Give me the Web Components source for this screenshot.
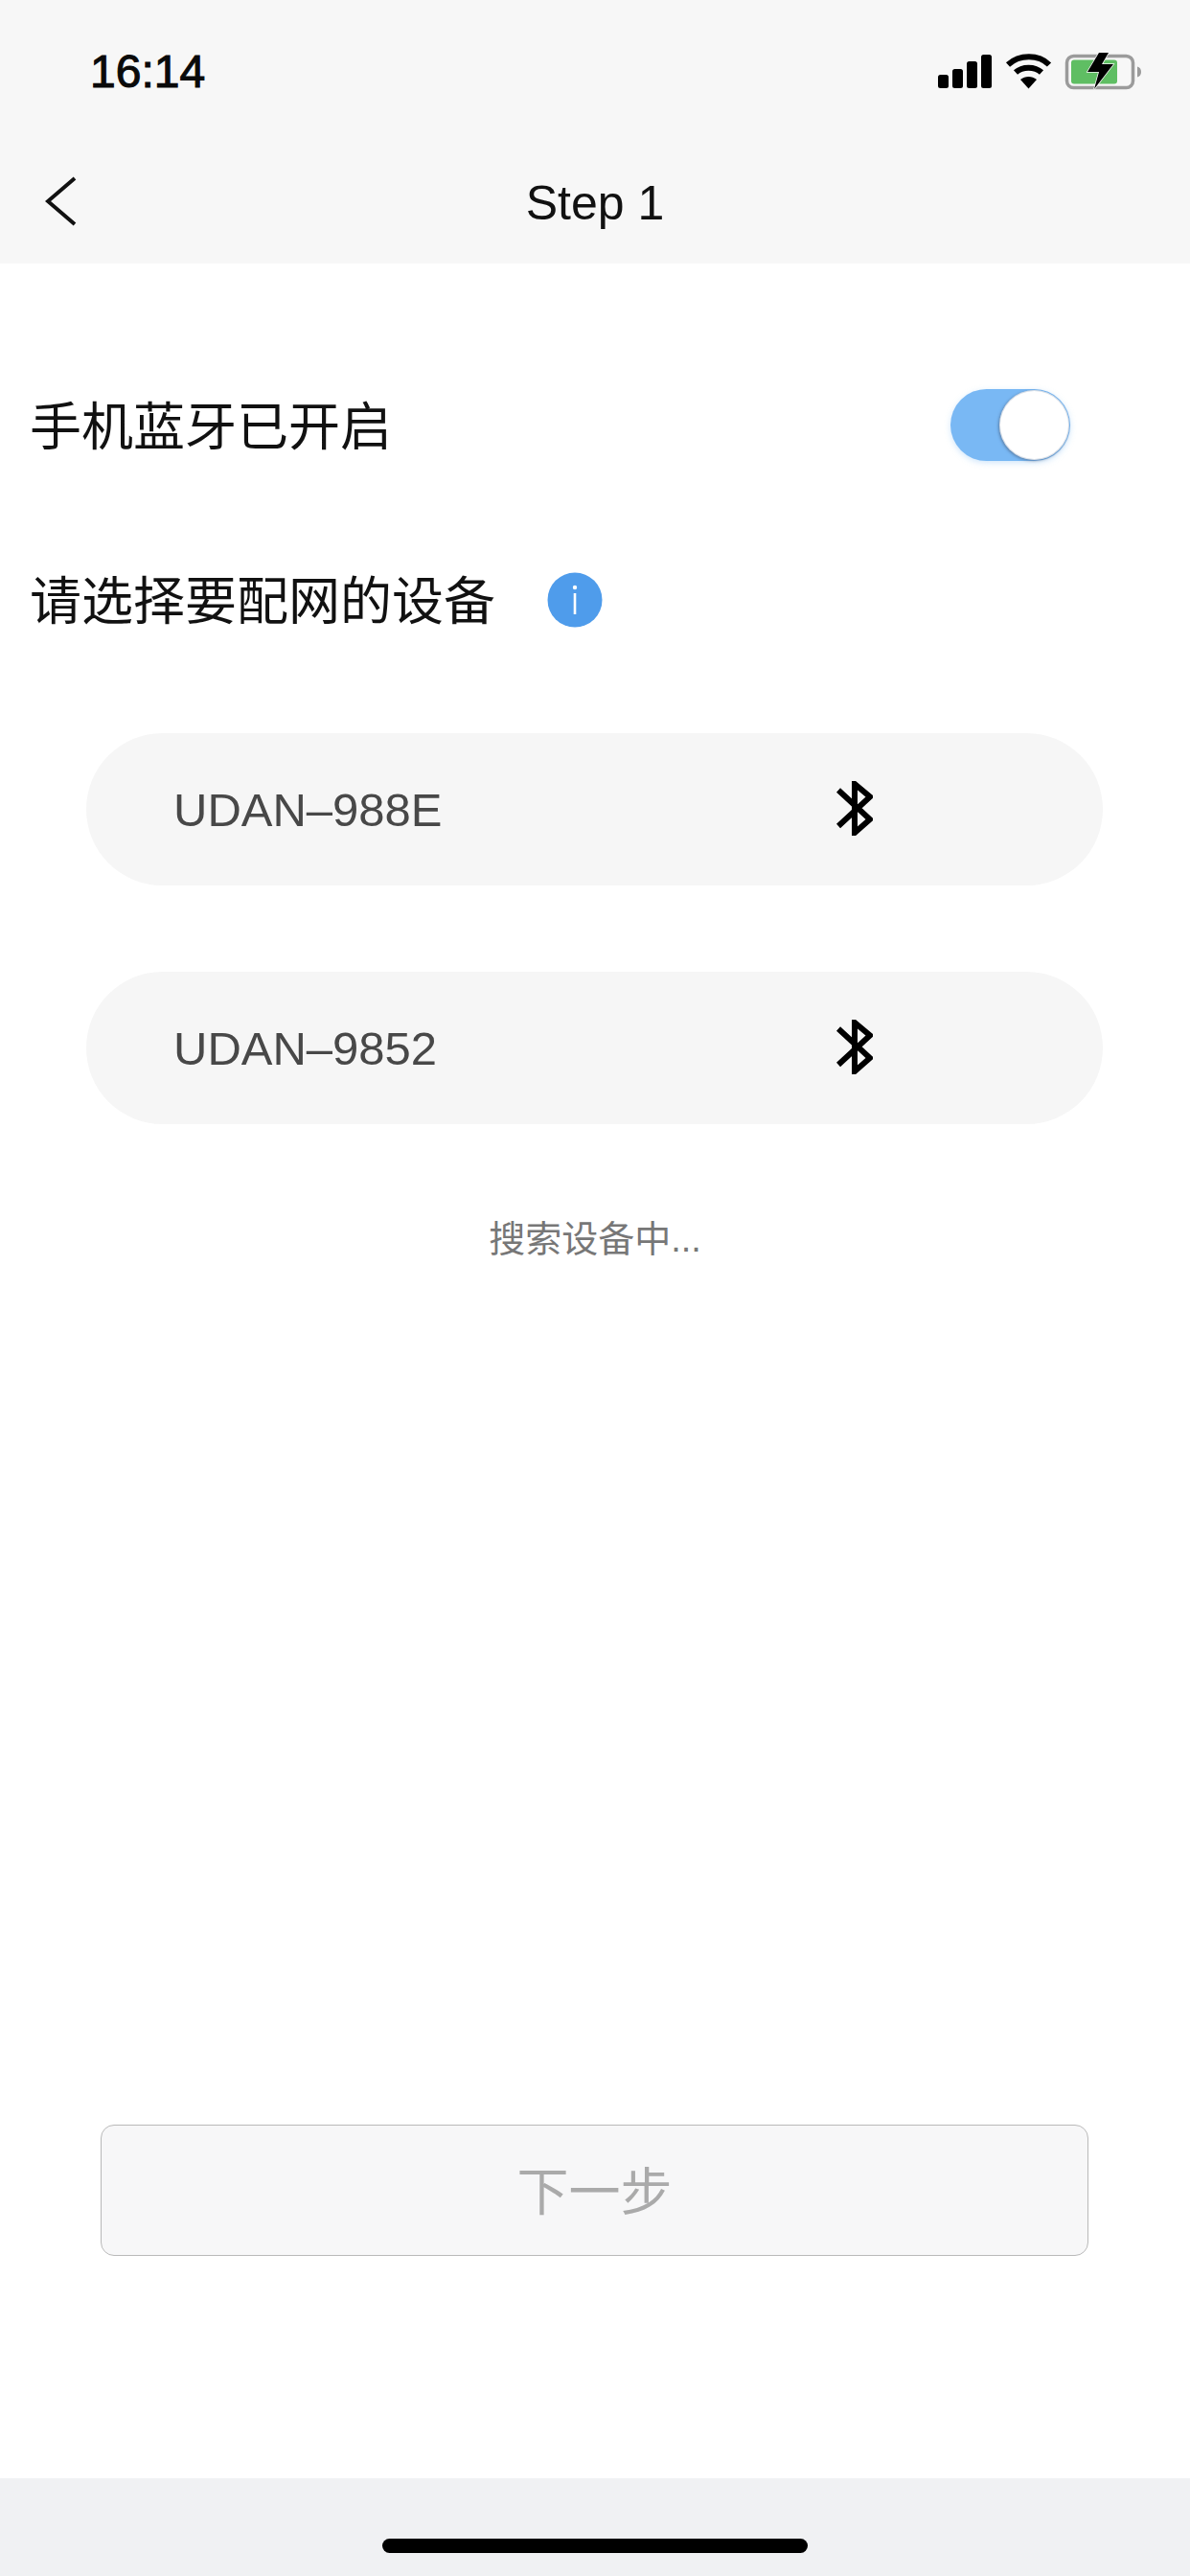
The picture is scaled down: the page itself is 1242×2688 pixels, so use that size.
<!DOCTYPE html>
<html lang="zh">
<head>
<meta charset="utf-8">
<title>Step 1</title>
<style>
  html, body { margin: 0; padding: 0; background: #fff; }
  body { font-family: "Liberation Sans", "Noto Sans CJK SC", sans-serif; }
</style>
</head>
<body>
<app-screen>
  <status-bar slot="top" time="16:14"></status-bar>
  <nav-bar slot="top">Step 1</nav-bar>

  <setting-row class="first">手机蓝牙已开启<toggle-switch slot="control"></toggle-switch></setting-row>
  <setting-row gap="54">请选择要配网的设备<info-badge slot="control"></info-badge></setting-row>

  <device-list>
    <device-row>UDAN–988E</device-row>
    <device-row>UDAN–9852</device-row>
  </device-list>
  <search-hint>搜索设备中...</search-hint>

  <next-button slot="footer">下一步</next-button>
  <home-bar slot="bottom"></home-bar>
</app-screen>

<script>
  const CJK = '"Liberation Sans", "Noto Sans CJK SC", sans-serif';

  class AppScreen extends HTMLElement {
    constructor() {
      super();
      this.attachShadow({ mode: 'open' });
      this.shadowRoot.innerHTML = `
        <style>
          :host { display: flex; flex-direction: column; width: 1242px; height: 2688px; overflow: hidden; background: #fff; font-family: ${CJK}; }
          .top { background: #f7f7f7; height: 275px; display: flex; flex-direction: column; }
          main { flex: 1; display: flex; flex-direction: column; padding: 123px 0 232px; min-height: 0; }
          .footer { margin-top: auto; }
        </style>
        <div class="top"><slot name="top"></slot></div>
        <main>
          <slot></slot>
          <div class="footer"><slot name="footer"></slot></div>
        </main>
        <slot name="bottom"></slot>
      `;
    }
  }

  class StatusBar extends HTMLElement {
    constructor() {
      super();
      this.attachShadow({ mode: 'open' });
      this.shadowRoot.innerHTML = `
        <style>
          :host { display: flex; align-items: center; justify-content: space-between; height: 150px; padding: 0 50px 0 94px; box-sizing: border-box; }
          .time { font-size: 48px; font-weight: 400; -webkit-text-stroke: 1.1px #0a0a0a; color: #0a0a0a; line-height: 1; }
          svg { display: block; }
        </style>
        <span class="time">${this.getAttribute('time')}</span>
        <svg width="213" height="40" viewBox="0 0 213 40">
          <g fill="#000">
            <rect x="0" y="23" width="11" height="14" rx="2.5"/>
            <rect x="15" y="17" width="11" height="20" rx="2.5"/>
            <rect x="30" y="9" width="11" height="28" rx="2.5"/>
            <rect x="45" y="2" width="11" height="35" rx="2.5"/>
          </g>
          <g fill="none" stroke="#000" stroke-width="6">
            <path d="M73 12.5C85 1.5 105 1.5 116 12.5"/>
            <path d="M81 20.5C88 14 101 14 108 20.5"/>
          </g>
          <path d="M86 28C91 24 98 24 103 28L94.5 37.5Z" fill="#000"/>
          <rect x="134.5" y="3.5" width="69" height="33" rx="7" fill="none" stroke="#9b9b9b" stroke-width="3.500"/>
          <rect x="139" y="7.500" width="48" height="25" rx="3" fill="#5fbe63"/>
          <path d="M208 14.500c2.500.5 4 2.500 4 5.500s-1.500 5-4 5.500z" fill="#9b9b9b"/>
          <path d="M168 0H178L171 12H183L163 38L168 20H156Z" fill="#000" stroke="#f7f7f7" stroke-width="1.500" paint-order="stroke"/>
        </svg>
      `;
    }
  }

  class NavBar extends HTMLElement {
    constructor() {
      super();
      this.attachShadow({ mode: 'open' });
      this.shadowRoot.innerHTML = `
        <style>
          :host { display: grid; grid-template-columns: 1fr auto 1fr; align-items: center; height: 120px; padding: 0 47px; box-sizing: border-box; margin-bottom: 5px; }
          .title { font-size: 50px; color: #111; line-height: 1; padding-top: 3px; }
          svg { display: block; }
        </style>
        <svg width="34" height="54" viewBox="0 0 34 54">
          <path d="M31 3L3 27L31 51" fill="none" stroke="#111" stroke-width="4"/>
        </svg>
        <span class="title"><slot></slot></span>
        <span></span>
      `;
    }
  }

  class SettingRow extends HTMLElement {
    constructor() {
      super();
      this.attachShadow({ mode: 'open' });
      this.shadowRoot.innerHTML = `
        <style>
          :host { display: flex; align-items: center; height: 90px; padding: 0 0 0 31px; font-size: 54px; color: #111; }
          :host(.first) { margin-bottom: 92px; justify-content: space-between; padding-right: 125px; }
          .label { line-height: 1; padding-top: 5px; }
          .ctl { display: flex; }
        </style>
        <span class="label"><slot></slot></span>
        <span class="ctl"><slot name="control"></slot></span>
      `;
      const gap = this.getAttribute('gap');
      if (gap) this.shadowRoot.querySelector('.ctl').style.marginLeft = gap + 'px';
    }
  }

  class ToggleSwitch extends HTMLElement {
    constructor() {
      super();
      this.attachShadow({ mode: 'open' });
      this.shadowRoot.innerHTML = `
        <style>
          :host { display: flex; justify-content: flex-end; align-items: center; width: 125px; height: 75px; padding: 1px; box-sizing: border-box; border-radius: 38px; background: #79b8f4; box-shadow: 0 2px 6px rgba(121, 184, 244, .35); }
          .knob { width: 73px; height: 73px; border-radius: 50%; background: #fff; box-shadow: -1px 1px 3px rgba(60, 80, 110, .55), inset 0 0 0 1px rgba(140, 160, 185, .35); }
        </style>
        <div class="knob"></div>
      `;
    }
  }

  class InfoBadge extends HTMLElement {
    constructor() {
      super();
      this.attachShadow({ mode: 'open' });
      this.shadowRoot.innerHTML = `
        <style>
          :host { display: block; width: 58px; height: 58px; margin-top: 2px; }
          svg { display: block; }
        </style>
        <svg width="58" height="58" viewBox="0 0 58 58">
          <circle cx="29" cy="29" r="28.500" fill="#4f9ceb"/>
          <circle cx="29" cy="16" r="2.200" fill="#fff"/>
          <rect x="27.700" y="22" width="2.600" height="22" fill="#fff"/>
        </svg>
      `;
    }
  }

  class DeviceList extends HTMLElement {
    constructor() {
      super();
      this.attachShadow({ mode: 'open' });
      this.shadowRoot.innerHTML = `
        <style>
          :host { display: flex; flex-direction: column; gap: 90px; margin: 95px 91px 0 90px; }
        </style>
        <slot></slot>
      `;
    }
  }

  class DeviceRow extends HTMLElement {
    constructor() {
      super();
      this.attachShadow({ mode: 'open' });
      this.shadowRoot.innerHTML = `
        <style>
          :host { display: flex; align-items: center; justify-content: space-between; height: 159px; padding: 0 240px 0 91px; border-radius: 80px; background: #f6f6f6; font-size: 49px; color: #484848; }
          svg { display: block; margin-top: -3px; }
        </style>
        <span><slot></slot></span>
        <svg width="38" height="57" viewBox="0 0 38 57">
          <path d="M2 9.500L35 40L19 54V3L35 16.500L2 47" fill="none" stroke="#000" stroke-width="6"/>
        </svg>
      `;
    }
  }

  class SearchHint extends HTMLElement {
    constructor() {
      super();
      this.attachShadow({ mode: 'open' });
      this.shadowRoot.innerHTML = `
        <style>
          :host { display: block; margin-top: 95px; text-align: center; font-size: 38px; line-height: 50px; color: #777; }
        </style>
        <slot></slot>
      `;
    }
  }

  class NextButton extends HTMLElement {
    constructor() {
      super();
      this.attachShadow({ mode: 'open' });
      this.shadowRoot.innerHTML = `
        <style>
          :host { display: flex; align-items: center; justify-content: center; height: 137px; margin: 0 106px 0 105px; padding-bottom: 4px; box-sizing: border-box; border: 1px solid #b9b9b9; border-radius: 14px; background: #f7f7f8; font-size: 54px; color: #aaa; }
        </style>
        <slot></slot>
      `;
    }
  }

  class HomeBar extends HTMLElement {
    constructor() {
      super();
      this.attachShadow({ mode: 'open' });
      this.shadowRoot.innerHTML = `
        <style>
          :host { display: flex; justify-content: center; height: 102px; padding-top: 63px; box-sizing: border-box; background: #f0f1f3; }
          .pill { width: 444px; height: 15px; border-radius: 8px; background: #000; }
        </style>
        <div class="pill"></div>
      `;
    }
  }

  customElements.define('app-screen', AppScreen);
  customElements.define('status-bar', StatusBar);
  customElements.define('nav-bar', NavBar);
  customElements.define('setting-row', SettingRow);
  customElements.define('toggle-switch', ToggleSwitch);
  customElements.define('info-badge', InfoBadge);
  customElements.define('device-list', DeviceList);
  customElements.define('device-row', DeviceRow);
  customElements.define('search-hint', SearchHint);
  customElements.define('next-button', NextButton);
  customElements.define('home-bar', HomeBar);
</script>
</body>
</html>
